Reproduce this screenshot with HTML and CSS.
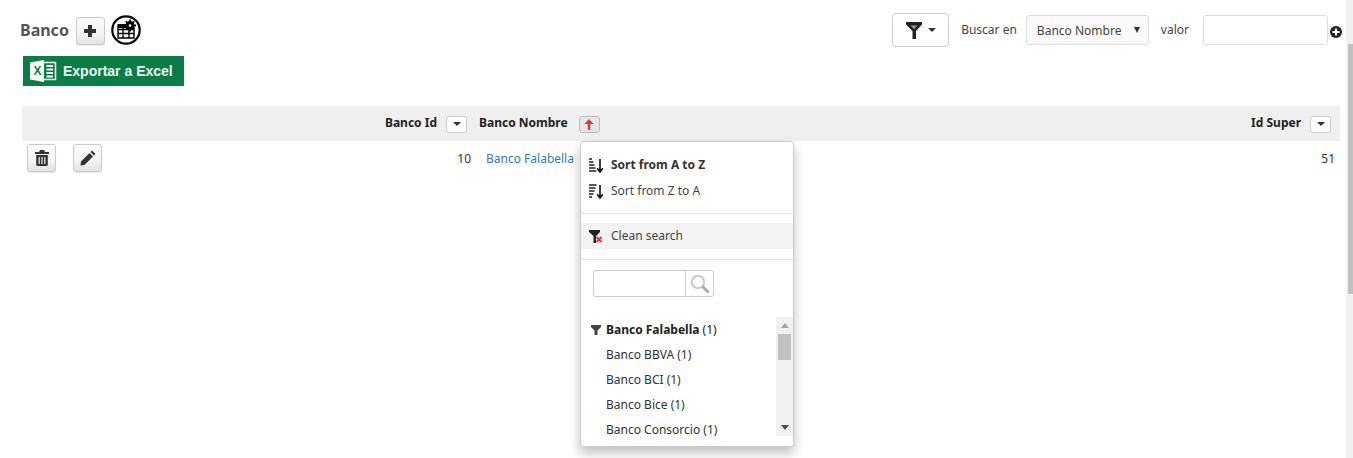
FILE: index.html

```html
<!DOCTYPE html>
<html lang="es">
<head>
  <meta charset="UTF-8">
  <title>Banco</title>
  <link rel="stylesheet" href="styles.css">
</head>
<body>

<div class="page">
  <main class="content">

    <div class="toolbar">
      <div class="title-group">
        <h1>Banco</h1>
        <button class="btn btn-add" aria-label="Agregar">
          <svg width="14" height="14" viewBox="0 0 14 14"><path d="M5 1h4v4h4v4H9v4H5V9H1V5h4z" fill="#333"/></svg>
        </button>
        <span class="config-icon">
          <svg width="30" height="30" viewBox="0 0 30 30">
            <circle cx="15" cy="15" r="13.7" fill="#fff" stroke="#000" stroke-width="2.2"/>
            <path d="M7 10h11v3h5v10H7z" fill="#fff" stroke="#000" stroke-width="1.4"/>
            <path d="M7 14.5h16M7 18.5h16M12 12v11M18 14v9" stroke="#000" stroke-width="1.4"/>
            <path d="M7 9h10v4H7z" fill="#000"/>
            <circle cx="19" cy="10.500" r="4.500" fill="#000"/>
            <path d="M19 4.500v12M13 10.500h12M14.800 6.300l8.400 8.400M23.200 6.300l-8.400 8.400" stroke="#000" stroke-width="1.800"/>
            <circle cx="19" cy="10.500" r="1.300" fill="#fff"/>
          </svg>
        </span>
      </div>

      <div class="search-group">
        <button class="btn-filter" aria-label="Filtro">
          <svg width="16" height="17" viewBox="0 0 16 17"><path d="M0 0h16v2.500L10 9v8H6.500V9L0 2.500z" fill="#222"/><path d="M4.500 3.500h7L8 7z" fill="#999"/></svg>
          <span class="caret"></span>
        </button>
        <label class="search-label label-field">Buscar en</label>
        <div class="select-wrap">
          <select class="search-select">
            <option>Banco Nombre</option>
          </select>
        </div>
        <label class="search-label label-value">valor</label>
        <input class="search-input" type="text">
        <span class="add-filter">
          <svg width="12" height="12" viewBox="0 0 12 12"><circle cx="6" cy="6" r="6" fill="#222"/><path d="M5 2.500h2V5h2.500v2H7v2.500H5V7H2.500V5H5z" fill="#fff"/></svg>
        </span>
      </div>
    </div>

    <button class="btn-excel">
      <svg width="28" height="24" viewBox="0 0 28 24">
        <path d="M1 3.500 15 1v22L1 20.500z" fill="#fff"/>
        <path d="M15 3.500h11.500v17H15" fill="none" stroke="#fff" stroke-width="1.500"/>
        <path d="M17.500 7h6.500M17.500 10.500h6.500M17.500 14h6.500M17.500 17.500h6.500" stroke="#fff" stroke-width="2"/>
        <text x="4.500" y="16" class="excel-x">X</text>
      </svg>
      <span>Exportar a Excel</span>
    </button>

    <table class="grid">
      <colgroup>
        <col class="col-actions">
        <col class="col-id">
        <col>
        <col class="col-super">
      </colgroup>
      <thead>
        <tr>
          <th></th>
          <th class="th-id">Banco Id<button class="sort-btn"><span class="caret"></span></button></th>
          <th class="th-name">
            <div class="th-anchor">Banco Nombre<button class="sort-btn sort-active" aria-label="Ordenar">
                <svg width="10" height="11" viewBox="0 0 10 11"><path d="M5 0 9.500 5H6.200v6H3.800V5H.5z" fill="#e8352c"/></svg>
              </button>

              <div class="menu">
                <div class="menu-item menu-strong">
                  <svg class="menu-icon" width="16" height="15" viewBox="0 0 16 15">
                    <path d="M1 1h3M1 4h4.500M1 7h5.500M1 10h6.500M1 13h7.500" stroke="#222" stroke-width="1.600"/>
                    <path d="M12 1v12M9.200 10.300 12 14l2.800-3.700" fill="none" stroke="#111" stroke-width="1.600"/>
                  </svg>
                  Sort from A to Z
                </div>
                <div class="menu-item">
                  <svg class="menu-icon" width="16" height="15" viewBox="0 0 16 15">
                    <path d="M1 1h7.500M1 4h6.500M1 7h5.500M1 10h4.500M1 13h3" stroke="#222" stroke-width="1.600"/>
                    <path d="M12 1v12M9.200 10.300 12 14l2.800-3.700" fill="none" stroke="#111" stroke-width="1.600"/>
                  </svg>
                  Sort from Z to A
                </div>
                <hr class="menu-line line-sort">
                <div class="menu-item menu-clean">
                  <svg class="menu-icon" width="14" height="13" viewBox="0 0 14 13">
                    <path d="M0 0h11v2L7 6v7H4.500V6L0 2z" fill="#222"/>
                    <path d="M7.500 7l5 5M12.500 7l-5 5" stroke="#e0393e" stroke-width="2"/>
                  </svg>
                  Clean search
                </div>
                <hr class="menu-line line-clean">
                <div class="menu-search">
                  <input class="menu-input" type="text">
                  <span class="menu-search-btn">
                    <svg width="22" height="22" viewBox="0 0 22 22">
                      <circle cx="9" cy="9" r="6.200" fill="#fff" stroke="#c4c4c4" stroke-width="1.800"/>
                      <path d="M13.500 13.500 19.500 19.500" stroke="#aaa" stroke-width="3"/>
                    </svg>
                  </span>
                </div>
                <div class="value-list">
                  <ul class="values">
                    <li class="value-on">
                      <svg width="10" height="10" viewBox="0 0 10 10"><path d="M0 0h10v2L6.500 5.500V10h-3V5.500L0 2z" fill="#444"/></svg>
                      <b>Banco Falabella</b> (1)
                    </li>
                    <li>Banco BBVA (1)</li>
                    <li>Banco BCI (1)</li>
                    <li>Banco Bice (1)</li>
                    <li>Banco Consorcio (1)</li>
                  </ul>
                  <div class="list-scroll">
                    <span class="arrow-up"></span>
                    <span class="list-thumb"></span>
                    <span class="arrow-down"></span>
                  </div>
                </div>
              </div>
            </div>
          </th>
          <th class="th-super">Id Super<button class="sort-btn"><span class="caret"></span></button></th>
        </tr>
      </thead>
      <tbody>
        <tr>
          <td class="td-actions">
            <button class="btn btn-row" aria-label="Borrar">
              <svg width="14" height="16" viewBox="0 0 14 16">
                <path d="M5 0h4l1 2h4v2H0V2h4z" fill="#333"/>
                <path d="M1.200 5h11.600v9.500a1.500 1.500 0 0 1-1.500 1.500H2.700a1.500 1.500 0 0 1-1.500-1.500z" fill="#333"/>
                <path d="M4.200 7v7M7 7v7M9.800 7v7" stroke="#eee" stroke-width="1.200"/>
              </svg>
            </button>
            <button class="btn btn-row" aria-label="Editar">
              <svg width="16" height="16" viewBox="0 0 16 16">
                <path d="M12 0.500 15.500 4 14 5.500 10.500 2z" fill="#333"/>
                <path d="M9.500 3 13 6.500 4.500 15 0.500 15.500 1 11.500z" fill="#333"/>
              </svg>
            </button>
          </td>
          <td class="td-id">10</td>
          <td class="td-name"><a href="#">Banco Falabella</a></td>
          <td class="td-super">51</td>
        </tr>
      </tbody>
    </table>

  </main>
  <div class="page-scroll"><span class="page-thumb"></span></div>
</div>

</body>
</html>
```

FILE: styles.css

```css
html, body {
  margin: 0;
  height: 100%;
  overflow: hidden;
}
body {
  font-family: 'Noto Sans', Tahoma, sans-serif;
  font-size: 12px;
  color: #333;
  background-color: #fff;
}
button {
  font-family: inherit;
  padding: 0;
  cursor: pointer;
}
.page {
  display: flex;
  height: 458px;
}
.content {
  flex: 1;
  min-width: 0;
  padding: 15px 0 0 20px;
}
.page-scroll {
  width: 7px;
  background-color: #f1f1f1;
  padding: 44px 0 0 2px;
  box-sizing: border-box;
}
.page-thumb {
  display: block;
  height: 250px;
  background-color: #c1c1c1;
}

/* barra superior */
.toolbar {
  display: flex;
  justify-content: space-between;
  height: 41px;
}
.title-group {
  display: flex;
  align-items: flex-start;
}
h1 {
  margin: 5px 7px 0 0;
  font-size: 16px;
  font-weight: bold;
  line-height: 20px;
  color: #555;
}
.btn {
  display: flex;
  align-items: center;
  justify-content: center;
  box-sizing: border-box;
  border: 1px solid #ccc;
  border-radius: 3px;
  background: linear-gradient(#fcfcfc, #f4f4f4 60%, #e2e2e2);
  box-shadow: 0 1px 1px rgba(0, 0, 0, 0.1);
}
.btn-add {
  width: 29px;
  height: 28px;
  margin-top: 2px;
}
.config-icon {
  display: block;
  height: 30px;
  margin-left: 6px;
}
.search-group {
  display: flex;
  align-items: flex-start;
  padding-right: 4px;
}
.btn-filter {
  display: flex;
  align-items: center;
  justify-content: center;
  gap: 6px;
  width: 57px;
  height: 34px;
  margin-top: -2px;
  border: 1px solid #ccc;
  border-radius: 4px;
  background-color: #fff;
}
.caret {
  display: inline-block;
  width: 0;
  height: 0;
  border-left: 4px solid transparent;
  border-right: 4px solid transparent;
  border-top: 4px solid #333;
}
.search-label {
  line-height: 30px;
  color: #444;
}
.label-field {
  margin: 0 9px 0 12px;
}
.label-value {
  margin: 0 14px 0 12px;
}
.select-wrap {
  position: relative;
}
.select-wrap::after {
  content: "";
  position: absolute;
  top: 12px;
  right: 9px;
  border-left: 3px solid transparent;
  border-right: 3px solid transparent;
  border-top: 6px solid #333;
}
.search-select {
  display: block;
  width: 123px;
  height: 30px;
  padding: 0 0 0 10px;
  appearance: none;
  font-family: inherit;
  font-size: 12px;
  color: #444;
  border: 1px solid #ddd;
  border-radius: 3px;
  background-color: #fafafa;
}
.search-input {
  display: block;
  box-sizing: border-box;
  width: 125px;
  height: 30px;
  border: 1px solid #ddd;
  border-radius: 3px;
}
.add-filter {
  display: block;
  height: 12px;
  margin: 10px 0 0 2px;
}

/* boton excel */
.btn-excel {
  display: flex;
  align-items: center;
  gap: 6px;
  width: 161px;
  height: 30px;
  margin-left: 3px;
  padding-left: 6px;
  border: 0;
  background-color: #0a7d47;
  color: #eef6f1;
  font-family: 'Liberation Sans', Arial, sans-serif;
  font-size: 14px;
  font-weight: bold;
}
.excel-x {
  font-family: 'Liberation Sans', Arial, sans-serif;
  font-size: 12px;
  font-weight: bold;
  fill: #0a7d47;
}

/* tabla */
.grid {
  width: 1318px;
  margin: 20px 0 0 2px;
  border-collapse: collapse;
  table-layout: fixed;
}
.col-actions {
  width: 100px;
}
.col-id {
  width: 350px;
}
.col-super {
  width: 200px;
}
th {
  height: 35px;
  padding: 0;
  background-color: #f0f0f0;
  font-weight: bold;
  color: #222;
  white-space: nowrap;
}
.th-id {
  text-align: right;
  padding-right: 5px;
}
.th-name {
  text-align: left;
  padding-left: 7px;
}
.th-anchor {
  position: relative;
}
.th-super {
  text-align: right;
  padding-right: 9px;
}
.sort-btn {
  display: inline-flex;
  align-items: center;
  justify-content: center;
  box-sizing: border-box;
  width: 21px;
  height: 17px;
  margin-left: 9px;
  vertical-align: middle;
  border: 1px solid #ccc;
  border-radius: 3px;
  background-color: #fff;
}
.sort-active {
  margin-left: 11px;
  background-color: #e6e6e6;
  border-color: #bbb;
}
td {
  padding: 0;
  height: 36px;
  vertical-align: top;
  line-height: 35px;
}
.td-actions {
  display: flex;
  gap: 17px;
  padding: 3px 0 0 5px;
  box-sizing: border-box;
}
.btn-row {
  width: 29px;
  height: 28px;
}
.td-id {
  text-align: right;
  padding-right: 1px;
}
.td-name {
  padding-left: 14px;
}
.td-name a {
  color: #337ab7;
  text-decoration: none;
}
.td-super {
  text-align: right;
  padding-right: 5px;
}

/* menu de columna */
.menu {
  position: absolute;
  top: 27px;
  left: 101px;
  box-sizing: border-box;
  width: 214px;
  height: 306px;
  padding-top: 10px;
  border: 1px solid #ccc;
  border-radius: 3px;
  background-color: #fff;
  box-shadow: 0 6px 12px rgba(0, 0, 0, 0.25);
  font-weight: normal;
  color: #444;
  line-height: 26px;
}
.menu-item {
  display: flex;
  align-items: center;
  height: 26px;
  padding-left: 7px;
}
.menu-icon {
  width: 16px;
  margin-right: 7px;
}
.menu-strong {
  font-weight: bold;
  color: #333;
}
.menu-line {
  margin: 0;
  border: 0;
  border-top: 1px solid #e5e5e5;
}
.line-sort {
  margin: 9px 0;
}
.line-clean {
  margin: 10px 0;
}
.menu-clean {
  background-color: #f3f3f3;
}
.menu-search {
  display: flex;
  width: 121px;
  height: 27px;
  margin-left: 12px;
  box-sizing: border-box;
  border: 1px solid #ccc;
  border-radius: 3px;
}
.menu-input {
  box-sizing: border-box;
  width: 92px;
  height: 25px;
  border: 0;
  border-right: 1px solid #ccc;
  background: transparent;
}
.menu-search-btn {
  display: flex;
  align-items: center;
  justify-content: center;
  flex: 1;
}
.value-list {
  display: flex;
  justify-content: space-between;
  height: 119px;
  margin-top: 20px;
}
.values {
  margin: 0;
  padding: 0 0 0 25px;
  list-style: none;
  line-height: 25px;
  color: #333;
}
.value-on {
  position: relative;
  color: #222;
}
.value-on svg {
  position: absolute;
  top: 8px;
  left: -15px;
}
.list-scroll {
  display: flex;
  flex-direction: column;
  align-items: center;
  box-sizing: border-box;
  width: 17px;
  background-color: #f1f1f1;
  padding-top: 6px;
}
.list-thumb {
  display: block;
  width: 13px;
  height: 26px;
  margin-top: 6px;
  background-color: #c1c1c1;
}
.arrow-up, .arrow-down {
  width: 0;
  height: 0;
  border-left: 4px solid transparent;
  border-right: 4px solid transparent;
}
.arrow-up {
  border-bottom: 5px solid #a3a3a3;
}
.arrow-down {
  margin-top: auto;
  margin-bottom: 6px;
  border-top: 5px solid #505050;
}
```
